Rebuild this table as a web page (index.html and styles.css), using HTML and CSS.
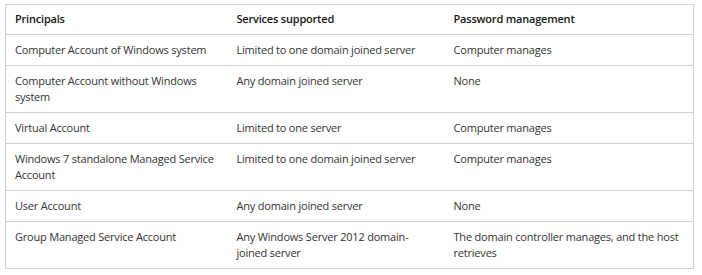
FILE: index.html
```html
<!DOCTYPE html>
<html>
<head>
<meta charset="utf-8">
<link rel="stylesheet" href="styles.css">
</head>
<body>
<table class="grid">
  <colgroup>
    <col class="c1"><col class="c2"><col class="c3">
  </colgroup>
  <thead>
    <tr><th>Principals</th><th>Services supported</th><th>Password management</th></tr>
  </thead>
  <tbody>
    <tr><td>Computer Account of Windows system</td><td>Limited to one domain joined server</td><td>Computer manages</td></tr>
    <tr><td>Computer Account without Windows system</td><td>Any domain joined server</td><td>None</td></tr>
    <tr><td>Virtual Account</td><td>Limited to one server</td><td>Computer manages</td></tr>
    <tr><td>Windows 7 standalone Managed Service Account</td><td>Limited to one domain joined server</td><td>Computer manages</td></tr>
    <tr><td>User Account</td><td>Any domain joined server</td><td>None</td></tr>
    <tr><td>Group Managed Service Account</td><td>Any Windows Server 2012 domain-joined server</td><td>The domain controller manages, and the host retrieves</td></tr>
  </tbody>
</table>
</body>
</html>
```
FILE: styles.css
```css
html, body { background: #fff; }
body {
  margin: 4px 0 0 5px;
  font-family: "Open Sans", "Noto Sans", sans-serif;
  font-size: 11px;
  letter-spacing: -0.2px;
  color: #333;
}
.grid {
  border-collapse: collapse;
  table-layout: fixed;
  width: 688px;
  border: 1px solid #d1d1d1;
}
.c1 { width: 222px; }
.c2 { width: 217px; }
.c3 { width: 249px; }
.grid th, .grid td {
  text-align: left;
  vertical-align: top;
  padding: 7px 8px 7px 9px;
  line-height: 16px;
  border-bottom: 1px solid #d1d1d1;
}
.grid th {
  padding: 6px 8px 7px 9px;
  font-weight: 600;
  color: #171717;
}
```
